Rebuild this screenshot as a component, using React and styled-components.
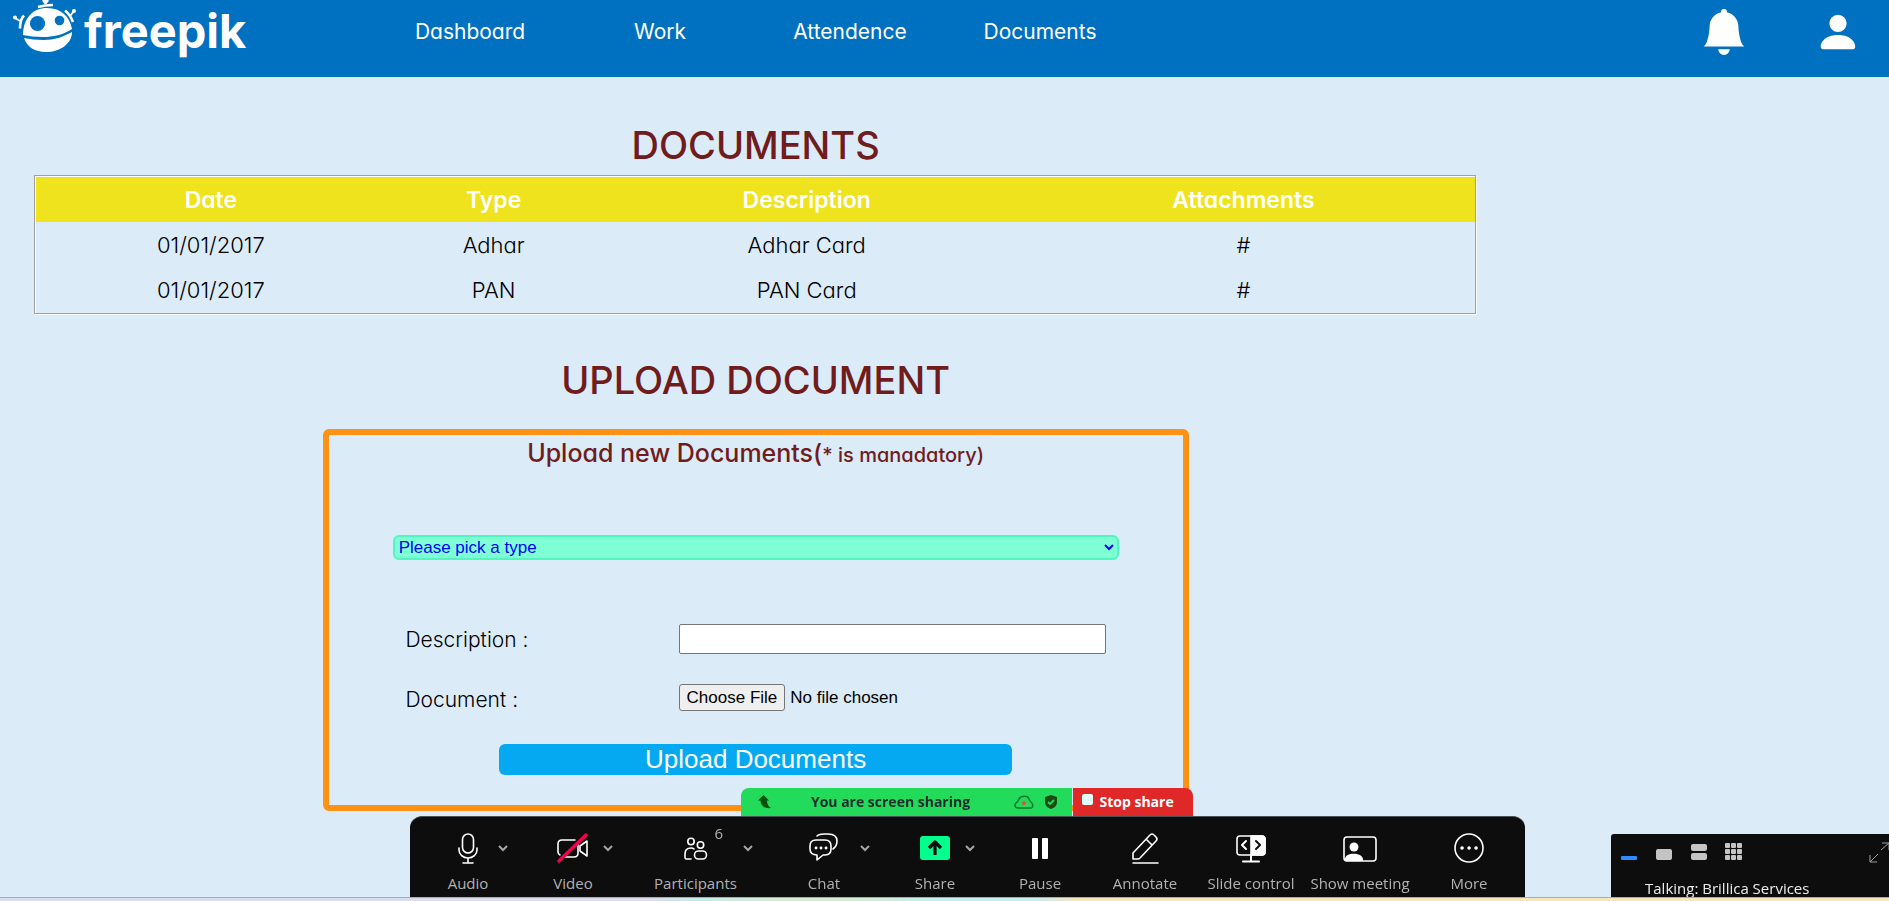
import React from "react";
import styled, { createGlobalStyle } from "styled-components";
import { BsBellFill, BsPersonFill } from "react-icons/bs";

const ui = `Inter, "Open Sans", sans-serif`;
const form = `"Liberation Sans", Arial, sans-serif`;
const meeting = `"Open Sans", "Noto Sans", sans-serif`;

const GlobalStyle = createGlobalStyle`
  * { box-sizing: border-box; }
  body {
    margin: 0;
    background: #dbebf8;
    color: #000;
    font-family: ${ui};
    font-feature-settings: "cv11";
    font-size: 20px;
  }
  button { font: inherit; color: inherit; border: 0; padding: 0; background: none; cursor: pointer; }
`;

/* ---------- header ---------- */

const Header = styled.header`
  display: flex;
  align-items: flex-start;
  height: 77px;
  padding-right: 28px;
  background: #0070c0;
  color: #fff;
`;

const Brand = styled.a`
  display: flex;
  flex: 0 0 375px;
  gap: 4px;
  padding-left: 10px;
  color: #fff;
  font-size: 47px;
  font-weight: 700;
  line-height: 62px;
  text-decoration: none;
`;

const Nav = styled.nav`
  display: flex;
  flex: 1;
`;

const NavLink = styled.a`
  width: 190px;
  color: #fff;
  font-size: 21px;
  line-height: 64px;
  text-align: center;
  text-decoration: none;
`;

const HeaderActions = styled.div`
  display: flex;
  gap: 68px;
  padding-top: 9px;
`;

const IconButton = styled.button`
  display: flex;
`;

/* ---------- documents ---------- */

const Main = styled.main`
  display: flex;
  flex-direction: column;
  align-items: center;
  width: 80%;
`;

const Heading = styled.h1`
  margin: ${(p) => p.$margin};
  color: #701c1c;
  font-size: 38px;
  font-weight: 500;
  line-height: 60px;
`;

const TableFrame = styled.div`
  width: 100%;
  padding: 0 35px 0 34px;
`;

const DocumentTable = styled.table`
  width: 100%;
  padding: 1px 0 1px 1px;
  border: 1px solid #a0a0a0;
  border-spacing: 0;
  table-layout: fixed;
  box-shadow: inset 1px 1px 0 #fff, 1px 1px 0 #fff;
  font-size: 22px;
  font-weight: 300;
  text-align: center;
`;

const HeadCell = styled.th`
  width: ${(p) => p.$width};
  height: 45px;
  padding: 0;
  background: #eee31d;
  color: #fff;
  font-size: 23px;
  font-weight: 600;
`;

const Cell = styled.td`
  height: 45px;
  padding: 0;
`;

const HashLink = styled.a`
  color: inherit;
  text-decoration: none;
`;

/* ---------- upload form ---------- */

const UploadForm = styled.form`
  display: flex;
  flex-direction: column;
  align-items: center;
  width: 866px;
  max-width: 100%;
  padding-bottom: 30px;
  border: 6px solid #ff9114;
  border-radius: 6px;
`;

const FormTitle = styled.h2`
  margin: 0 0 62px;
  color: #701c1c;
  font-size: 25px;
  font-weight: 500;
  line-height: 36px;
`;

const Note = styled.small`
  font-size: 20px;
`;

const TypeSelect = styled.select`
  width: 85%;
  height: 25px;
  margin-bottom: 64px;
  border: 2px solid #4ff7bf;
  border-radius: 6px;
  background: #7fffd4;
  color: #00f;
  font: 17px ${form};
`;

const Field = styled.div`
  display: flex;
  align-items: center;
  justify-content: space-between;
  width: 82%;
  height: 30px;
  margin-bottom: 30px;
`;

const FieldLabel = styled.label`
  font-size: 21px;
  font-weight: 300;
`;

const TextInput = styled.input`
  width: 61%;
  height: 30px;
  border: 1px solid #767676;
  border-radius: 2px;
  background: #fff;
  font: 17px ${form};
`;

const FileInput = styled.input`
  align-self: flex-start;
  width: 61%;
  font: 17px ${form};

  &::file-selector-button {
    height: 27px;
    margin: 0 5px 0 0;
    padding: 0 7px;
    border: 1px solid #767676;
    border-radius: 3px;
    background: #efefef;
    color: #000;
    font: 17px ${form};
  }
`;

const SubmitButton = styled.button`
  width: 60%;
  height: 31px;
  border-radius: 6px;
  background: #05a9f2;
  color: #fff;
  font: 26px/31px ${form};
`;

/* ---------- meeting overlay ---------- */

const Dock = styled.section`
  position: fixed;
  right: 0;
  bottom: 4px;
  left: 0;
  display: flex;
  flex-direction: column;
  align-items: center;
  padding-left: 46px;
  font-family: ${meeting};
  pointer-events: none;

  & > * { pointer-events: auto; }
`;

const ShareStatus = styled.div`
  display: flex;
  height: 28px;
  margin-right: 2px;
  font-size: 14px;
  font-weight: 700;
  line-height: 28px;
`;

const SharingBanner = styled.div`
  display: flex;
  align-items: center;
  width: 331px;
  padding: 0 14px 0 17px;
  border-radius: 8px 0 0 0;
  background: #23db5b;
  color: #1c2b2b;
`;

const BannerText = styled.span`
  flex: 1;
  padding-right: 4px;
  text-align: center;
`;

const BannerIcons = styled.span`
  display: flex;
  gap: 10px;
`;

const StopShare = styled.button`
  display: flex;
  gap: 7px;
  width: 120px;
  margin-left: 1px;
  padding-left: 9px;
  border-radius: 0 8px 0 0;
  background: #e02828;
  color: #fff;
`;

const StopMark = styled.span`
  width: 11px;
  height: 11px;
  margin-top: 6px;
  border-radius: 2px;
  background: #e0ffff;
`;

const Toolbar = styled.div`
  display: flex;
  width: 1115px;
  height: 81px;
  padding-left: 32px;
  border-top: 1px solid #4c5156;
  border-radius: 12px 12px 0 0;
  background: #0d0d0d;
  color: #b2b2b2;
  font-size: 15px;
`;

const MenuTools = styled.div`
  display: flex;
  gap: 35px;
  margin-right: 9px;
`;

const ToolGroup = styled.div`
  display: flex;
`;

const Tool = styled.button`
  position: relative;
  display: flex;
  flex-direction: column;
  align-items: center;
  width: ${(p) => p.$width}px;
  padding-top: 13px;
  line-height: 20px;
  white-space: nowrap;

  svg { margin-bottom: 7px; }
`;

const Count = styled.span`
  position: absolute;
  top: 6px;
  right: 16px;
`;

const MenuButton = styled.button`
  display: flex;
  justify-content: center;
  width: 18px;
  height: 12px;
  margin-top: 25px;
`;

const GalleryPanel = styled.aside`
  position: fixed;
  right: 0;
  bottom: 4px;
  width: 278px;
  height: 63px;
  border-radius: 3px 0 0 0;
  background: #0d0d0d;
  color: #ededed;
  font-family: ${meeting};
  font-size: 15px;
`;

const ViewModes = styled.div`
  display: flex;
  gap: 17px;
  height: 36px;
  padding: 8px 0 0 9px;
`;

const ExpandButton = styled.button`
  display: flex;
  margin-left: auto;
`;

const Talking = styled.p`
  margin: 0;
  padding-left: 34px;
  line-height: 36px;
`;

const TaskbarEdge = styled.div`
  position: fixed;
  right: 0;
  bottom: 0;
  left: 0;
  height: 4px;
  border-top: 1px solid #aaa9ad;
  background: linear-gradient(90deg, #dcdcf0 0 34%, #c4ecec 37%, #d0f0d0 41% 45%, #c4eef4 50%, #c8eef0 55%, #fae6bc 57%);
`;

/* ---------- drawings ---------- */

const RobotLogo = () => (
  <svg width="70" height="56" viewBox="10 0 70 56" fill="none" aria-hidden="true">
    <circle cx="45.5" cy="0" r="3.2" fill="#fff" />
    <path d="M45.500 1v3M38 7q7-2 15-2" stroke="#fff" strokeWidth="2.600" />
    <path d="M23 35C23 18 33 8 47 8c14 0 23 9 25 21-9 6-19 8-29 8-8 0-14-1-20-2z" fill="#fff" />
    <path d="M24 38c6 1 12 2 20 2 10 0 19-3 28-8 0 12-12 20-26 20-11 0-19-5-22-14z" fill="#fff" />
    <path d="M24.500 17.500q-4 4-4 12M66 9.500q4 4 7 12" stroke="#0070c0" strokeWidth="5" />
    <circle cx="37.500" cy="23.500" r="7.600" fill="#0070c0" />
    <circle cx="59.500" cy="20.500" r="4.800" fill="#0070c0" />
    <path d="M24 15.500q-4 4-4 13M65 10.500q5 4 8 11.500" stroke="#fff" strokeWidth="2.600" />
    <path d="M20 21l-5-3M70 16l4-5" stroke="#fff" strokeWidth="2" />
    <circle cx="15" cy="17.500" r="2" fill="#fff" />
    <circle cx="74" cy="11" r="2" fill="#fff" />
  </svg>
);

const ArrowGlyph = () => (
  <svg width="14" height="14" viewBox="0 0 14 14" aria-hidden="true">
    <path d="M5.500 0L0 5.500h2.500c0 4 3 8.500 10.500 7.500-3-2-4-4-4-7.500h2z" fill="#07520f" />
  </svg>
);

const CloudGlyph = () => (
  <svg width="20" height="14" viewBox="0 0 20 14" fill="none" aria-hidden="true">
    <path d="M4 13C1 13 0 10 2 8c1-1 2-1 2-2 1-4 5-6 10-4 1 1 1 3 2 4 3 2 4 6 1 7z" stroke="#0e7a2c" strokeWidth="1.500" />
    <circle cx="10" cy="8" r="2" fill="#f0483c" />
  </svg>
);

const ShieldGlyph = () => (
  <svg width="14" height="14" viewBox="0 0 14 14" fill="none" aria-hidden="true">
    <path d="M7 0l6 2v5c0 4-3 6-6 7-3-1-6-3-6-7V2z" fill="#1c4a14" />
    <path d="M4 7l2 2 4-4" stroke="#23db5b" strokeWidth="1.800" />
  </svg>
);

const Chevron = () => (
  <svg width="10" height="12" viewBox="0 0 10 12" fill="none" aria-hidden="true">
    <path d="M1 4l4 4 4-4" stroke="#a6a6a6" strokeWidth="2" />
  </svg>
);

const Drawing = ({ children }) => (
  <svg width="34" height="36" viewBox="0 0 34 36" fill="none" stroke="#fff" strokeWidth="1.600" strokeLinecap="round" strokeLinejoin="round" aria-hidden="true">
    {children}
  </svg>
);

const icons = {
  audio: (
    <Drawing>
      <rect x="11.500" y="4" width="11" height="19" rx="5.500" />
      <path d="M8 18v2a9 8 0 0 0 18 0v-2M17 28v5M12 33h10" />
    </Drawing>
  ),
  video: (
    <Drawing>
      <path d="M19 10H6q-4 0-4 4v8q0 2 2 3M9 27h9q4 0 4-4v-9M31 11l-7 5v5l7 5z" />
      <path d="M3 31L30 5" stroke="#f5004f" strokeWidth="3.500" />
    </Drawing>
  ),
  people: (
    <Drawing>
      <circle cx="12" cy="11.500" r="3.200" />
      <circle cx="21.500" cy="15" r="3.200" />
      <path d="M12 29H7q-1 0-1-2v-3q0-6 6-6 2 0 3 1" />
      <rect x="15.500" y="21" width="12" height="8" rx="4" />
    </Drawing>
  ),
  chat: (
    <Drawing>
      <path d="M10 6q2-2 7-2h4q9 0 9 7 0 5-4 8" />
      <path d="M9 10h9q6 0 6 6v3q0 6-6 6h-2l-6 5v-5q-7 0-7-6v-3q0-6 6-6z" />
      <path d="M9 18h.1M14 18h.1M19 18h.1" strokeWidth="2.800" />
    </Drawing>
  ),
  share: (
    <Drawing>
      <rect x="2" y="6" width="30" height="24" rx="3" fill="#00ff8c" stroke="none" />
      <path d="M17 25V13M11 18l6-6 6 6" stroke="#0d0d0d" strokeWidth="3.200" strokeLinecap="butt" />
    </Drawing>
  ),
  pause: (
    <Drawing>
      <rect x="9" y="8" width="6" height="21" rx="1" fill="#fff" stroke="none" />
      <rect x="19" y="8" width="6" height="21" rx="1" fill="#fff" stroke="none" />
    </Drawing>
  ),
  annotate: (
    <Drawing>
      <path d="M5 29v-6L22 5q2-2 4 0l2 2q2 2 0 4L12 28q-1 1-2 1zM18 9l6 6M5 33h25" />
    </Drawing>
  ),
  slide: (
    <Drawing>
      <rect x="3" y="6" width="28" height="19" rx="3" />
      <path d="M17 6h11q3 0 3 3v13q0 3-3 3H17z" fill="#fff" />
      <path d="M12 11l-4 4 4 4M17 25v6M9 31.500h16" strokeWidth="2" />
      <path d="M22 11l4 4-4 4" stroke="#0d0d0d" strokeWidth="2" />
    </Drawing>
  ),
  meeting: (
    <Drawing>
      <rect x="1" y="7" width="32" height="24" rx="3" />
      <circle cx="11" cy="17" r="4.500" fill="#fff" stroke="none" />
      <path d="M2 31v-2c0-7 17-7 18 0v2z" fill="#fff" stroke="none" />
    </Drawing>
  ),
  more: (
    <Drawing>
      <circle cx="17" cy="18" r="14" />
      <path d="M10 18h.1M17 18h.1M24 18h.1" strokeWidth="3.500" />
    </Drawing>
  ),
};

const ViewIcon = ({ children }) => (
  <svg width="18" height="20" viewBox="0 0 18 20" fill="#c4c4c4" aria-hidden="true">{children}</svg>
);

const ExpandIcon = () => (
  <svg width="20" height="22" viewBox="0 0 20 22" fill="none" stroke="#a0a0a0" aria-hidden="true">
    <path d="M12 8l8-7M13 1h7v7M9 12l-8 8M1 13v7h7" />
  </svg>
);

/* ---------- data ---------- */

const links = ["Dashboard", "Work", "Attendence", "Documents"];

const columns = [
  ["Date", "24.3%"],
  ["Type", "15%"],
  ["Description", "28.5%"],
  ["Attachments", "32.2%"],
];

const documents = [
  { date: "01/01/2017", type: "Adhar", description: "Adhar Card" },
  { date: "01/01/2017", type: "PAN", description: "PAN Card" },
];

const menuTools = [
  { icon: "audio", label: "Audio", width: 52 },
  { icon: "video", label: "Video", width: 52 },
  { icon: "people", label: "Participants", width: 87, count: 6 },
  { icon: "chat", label: "Chat", width: 64 },
  { icon: "share", label: "Share", width: 52 },
];

const plainTools = [
  { icon: "pause", label: "Pause", width: 104 },
  { icon: "annotate", label: "Annotate", width: 106 },
  { icon: "slide", label: "Slide control", width: 106 },
  { icon: "meeting", label: "Show meeting", width: 112 },
  { icon: "more", label: "More", width: 106 },
];

const ToolButton = ({ tool }) => (
  <Tool type="button" $width={tool.width}>
    {icons[tool.icon]}
    {tool.label}
    {tool.count && <Count>{tool.count}</Count>}
  </Tool>
);

export default function App() {
  return (
    <>
      <GlobalStyle />
      <Header>
        <Brand href="#home">
          <RobotLogo />
          freepik
        </Brand>
        <Nav>
          {links.map((name) => (
            <NavLink key={name} href={`#${name.toLowerCase()}`}>{name}</NavLink>
          ))}
        </Nav>
        <HeaderActions>
          <IconButton type="button" aria-label="Notifications"><BsBellFill size={46} /></IconButton>
          <IconButton type="button" aria-label="Profile"><BsPersonFill size={46} /></IconButton>
        </HeaderActions>
      </Header>

      <Main>
        <Heading $margin="38px 0 0">DOCUMENTS</Heading>
        <TableFrame>
          <DocumentTable>
            <thead>
              <tr>
                {columns.map(([name, width]) => (
                  <HeadCell key={name} $width={width}>{name}</HeadCell>
                ))}
              </tr>
            </thead>
            <tbody>
              {documents.map((doc) => (
                <tr key={doc.type}>
                  <Cell>{doc.date}</Cell>
                  <Cell>{doc.type}</Cell>
                  <Cell>{doc.description}</Cell>
                  <Cell><HashLink href="#file">#</HashLink></Cell>
                </tr>
              ))}
            </tbody>
          </DocumentTable>
        </TableFrame>

        <Heading $margin="36px 0 19px">UPLOAD DOCUMENT</Heading>
        <UploadForm onSubmit={(e) => e.preventDefault()}>
          <FormTitle>Upload new Documents(<Note>* is manadatory)</Note></FormTitle>
          <TypeSelect aria-label="Document type">
            <option>Please pick a type</option>
            <option>Adhar</option>
            <option>PAN</option>
          </TypeSelect>
          <Field>
            <FieldLabel htmlFor="description">Description :</FieldLabel>
            <TextInput id="description" type="text" />
          </Field>
          <Field>
            <FieldLabel htmlFor="document">Document :</FieldLabel>
            <FileInput id="document" type="file" />
          </Field>
          <SubmitButton type="submit">Upload Documents</SubmitButton>
        </UploadForm>
      </Main>

      <Dock aria-label="Meeting controls">
        <ShareStatus>
          <SharingBanner>
            <ArrowGlyph />
            <BannerText>You are screen sharing</BannerText>
            <BannerIcons><CloudGlyph /><ShieldGlyph /></BannerIcons>
          </SharingBanner>
          <StopShare type="button"><StopMark />Stop share</StopShare>
        </ShareStatus>
        <Toolbar>
          <MenuTools>
            {menuTools.map((tool) => (
              <ToolGroup key={tool.label}>
                <ToolButton tool={tool} />
                <MenuButton type="button" aria-label={`${tool.label} options`}><Chevron /></MenuButton>
              </ToolGroup>
            ))}
          </MenuTools>
          {plainTools.map((tool) => <ToolButton key={tool.label} tool={tool} />)}
        </Toolbar>
      </Dock>

      <GalleryPanel>
        <ViewModes>
          <IconButton type="button" aria-label="Minimize">
            <ViewIcon><rect x="1" y="14" width="16" height="4" rx="1" fill="#2d8cff" /></ViewIcon>
          </IconButton>
          <IconButton type="button" aria-label="Speaker view">
            <ViewIcon><rect x="1" y="7" width="16" height="11" rx="2" /></ViewIcon>
          </IconButton>
          <IconButton type="button" aria-label="Stacked view">
            <ViewIcon>
              <rect x="1" y="2" width="16" height="7" rx="2" />
              <rect x="1" y="11" width="16" height="7" rx="2" />
            </ViewIcon>
          </IconButton>
          <IconButton type="button" aria-label="Gallery view">
            <ViewIcon>
              {[1, 7, 13].map((y) => [0, 6, 12].map((x) => (
                <rect key={`${x}-${y}`} x={x} y={y} width="5" height="5" rx="1" />
              )))}
            </ViewIcon>
          </IconButton>
          <ExpandButton type="button" aria-label="Expand"><ExpandIcon /></ExpandButton>
        </ViewModes>
        <Talking>Talking: Brillica Services</Talking>
      </GalleryPanel>
      <TaskbarEdge />
    </>
  );
}
